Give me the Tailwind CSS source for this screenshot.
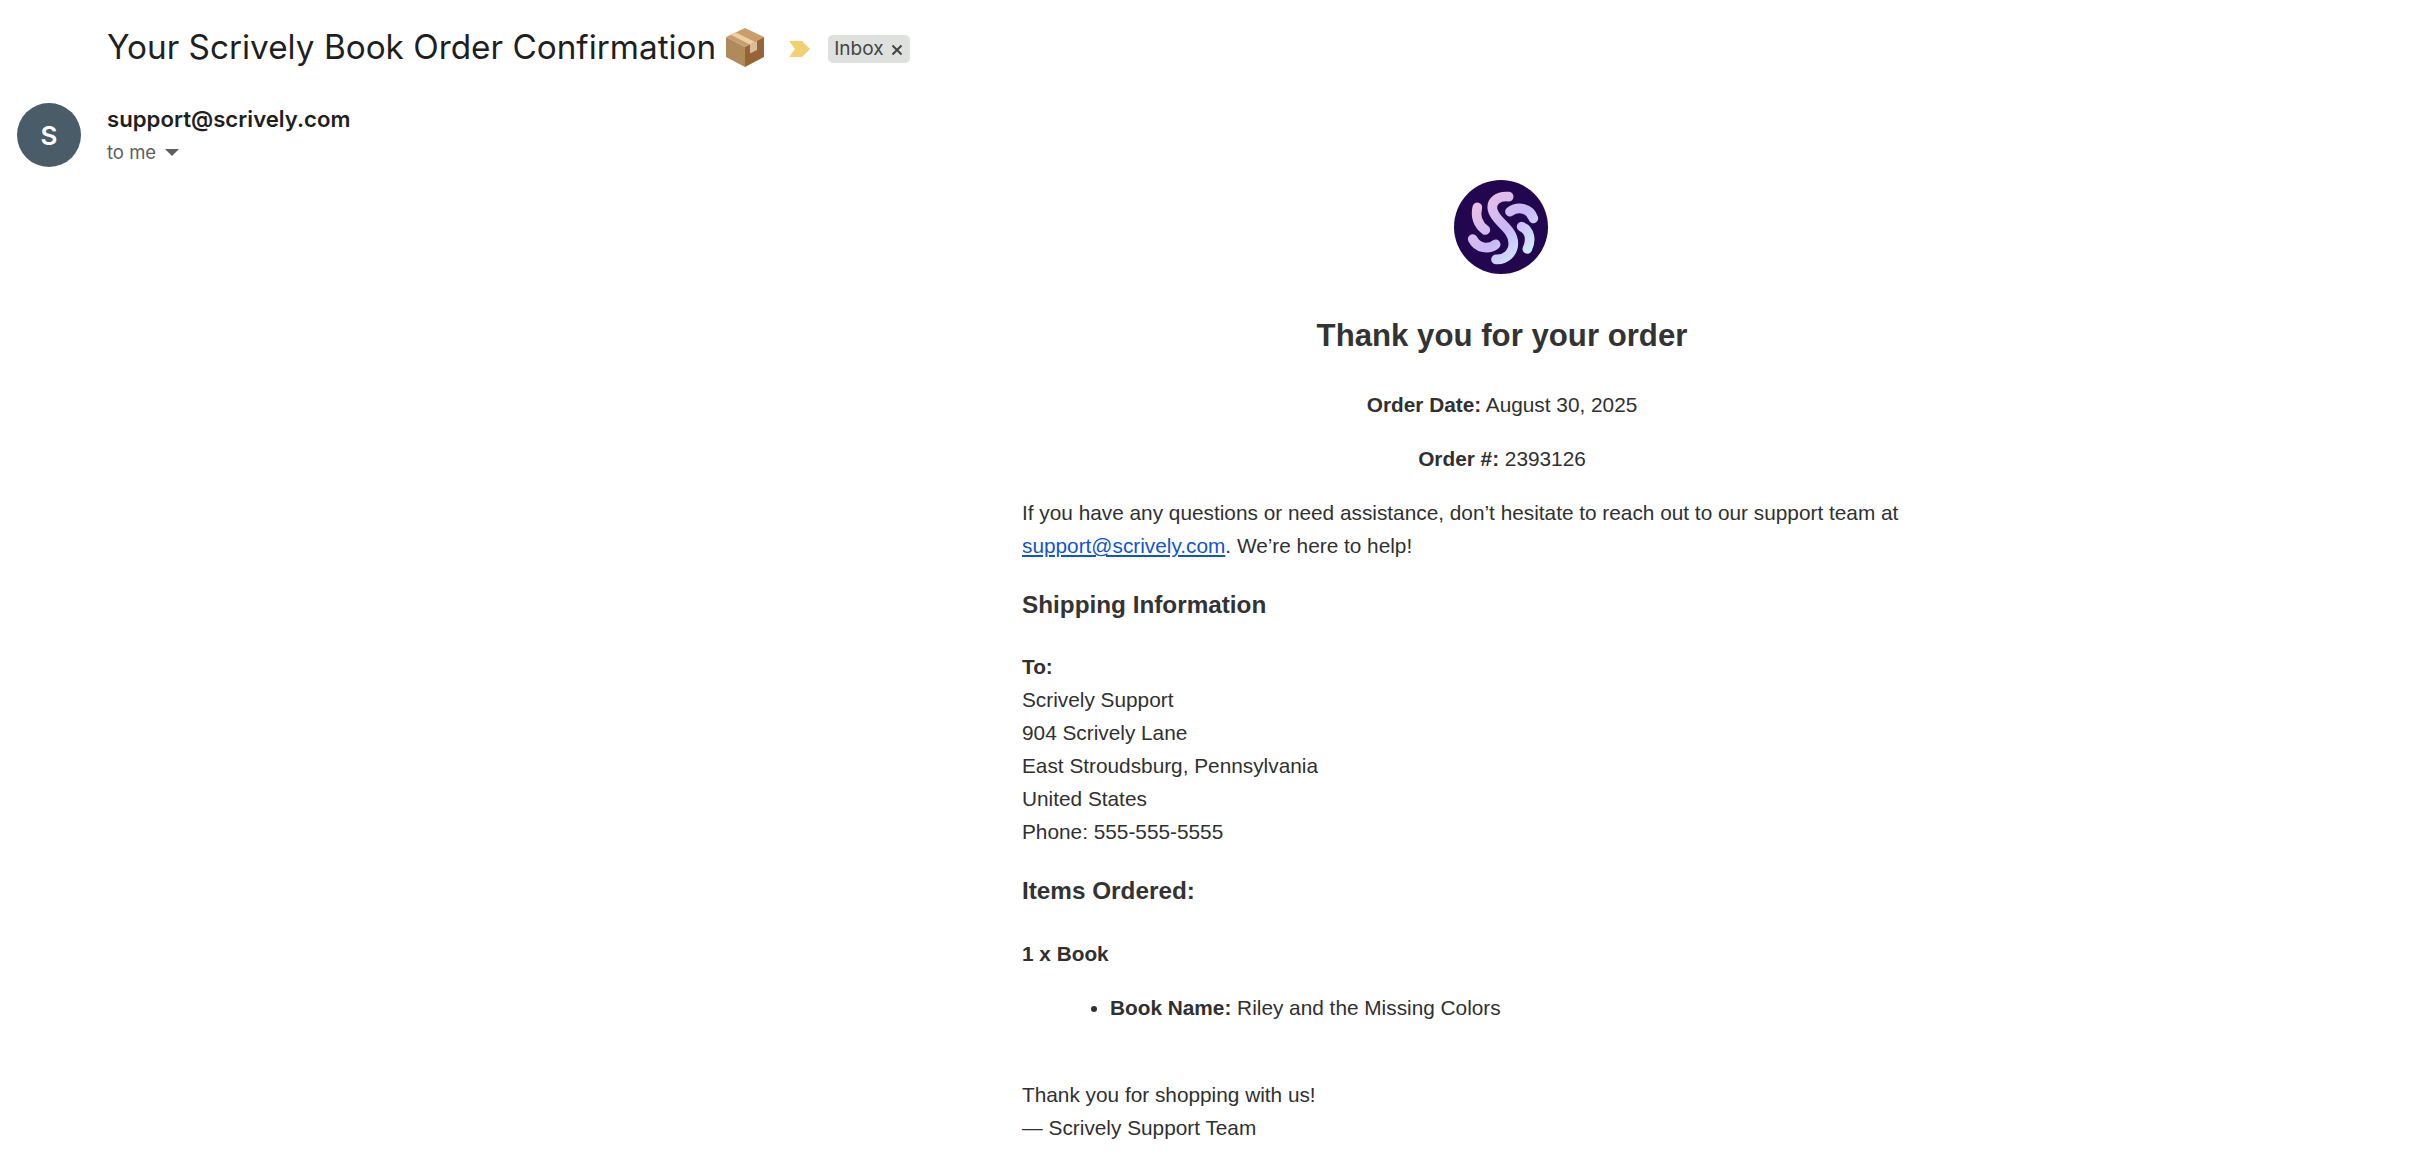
<!DOCTYPE html>
<html lang="en">
<head>
  <meta charset="UTF-8">
  <title>Your Scrively Book Order Confirmation</title>
  <script src="https://cdn.jsdelivr.net/npm/@tailwindcss/browser@4"></script>
</head>
<body class="bg-white font-['Liberation_Sans',sans-serif] text-[#303030]">
  <!-- subject -->
  <div class="flex items-center h-[94px] pl-[107px] font-['Inter',sans-serif]">
    <h1 class="text-[33.3px] leading-[44px] font-normal text-[#1f1f1f]">Your Scrively Book Order Confirmation</h1>
    <svg class="ml-[9px] w-[40px] h-[40px]" viewBox="0 0 40 40">
      <path d="M20 1 39 10 20 20 1 10Z" fill="#c99e6c"/>
      <path d="M1 10 20 20V40L1 30Z" fill="#b08a5a"/>
      <path d="M39 10 20 20V40L39 30Z" fill="#956538"/>
      <path d="M11 5.5 30 15 25 17.5 6 8Z" fill="#ecd0a4"/>
      <path d="M25 17.5 32 14V23L25 26.5Z" fill="#d8bd98"/>
    </svg>
    <svg class="ml-[24px] mt-[3px] w-[21px] h-[16px]" viewBox="0 0 21 16"><path d="M0 0H13L21 8 13 16H0L6 8Z" fill="#f1cf72"/></svg>
    <span class="ml-[18px] mt-[3px] flex items-center h-[28px] pl-[6px] pr-[7px] pt-[2px] rounded-[5px] bg-[#dfe1df] text-[19px] text-[#444]">Inbox
      <svg class="ml-[7px] w-[12px] h-[12px]" viewBox="0 0 12 12"><path d="M1.5 1.5 10.5 10.5M10.5 1.5 1.5 10.5" stroke="#444" stroke-width="2"/></svg>
    </span>
  </div>

  <!-- sender -->
  <div class="flex mt-[9px] pl-[17px] font-['Inter',sans-serif]">
    <div class="flex items-center justify-center w-[64px] h-[64px] rounded-full bg-[#4a5c68] text-white text-[26px] font-semibold">S</div>
    <div class="ml-[26px] mt-[1px]">
      <div class="text-[22.2px] leading-[30px] font-semibold text-[#1f1f1f]">support@scrively.com</div>
      <div class="flex items-center mt-[3px] text-[18.5px] leading-[30px] text-[#5e5e5e]">to me
        <svg class="ml-[9px] w-[14px] h-[7px]" viewBox="0 0 14 7"><path d="M0 0H14L7 7Z" fill="#5e5e5e"/></svg>
      </div>
    </div>
  </div>

  <!-- message -->
  <div class="w-[960px] ml-[1022px] text-[20.8px] leading-[33px] mt-[13px]">
    <svg class="mx-auto w-[94px] h-[94px] -translate-x-px" viewBox="102 45 282 282" fill="none" stroke="url(#g)" stroke-width="29" stroke-linecap="round">
      <defs>
        <linearGradient id="g" gradientUnits="userSpaceOnUse" x1="160" y1="100" x2="330" y2="280">
          <stop offset="0" stop-color="#f0c0de"/>
          <stop offset="0.55" stop-color="#c8b8f6"/>
          <stop offset="1" stop-color="#d2f4fa"/>
        </linearGradient>
      </defs>
      <circle cx="243" cy="186" r="141" fill="#22064f" stroke="none"/>
      <path d="M172 127C165 155 175 180 196 195"/>
      <path d="M158 222C172 250 205 255 227 238"/>
      <path d="M266 95C235 92 212 108 218 135C225 170 280 190 280 235C280 265 255 285 228 283"/>
      <path d="M270 140C295 122 330 130 340 160"/>
      <path d="M305 185C330 195 335 225 322 252"/>
    </svg>
    <h2 class="mt-[42px] text-center text-[31.2px] leading-[40px] font-bold text-[#333]">Thank you for your order</h2>
    <p class="mt-[32px] text-center"><strong>Order Date:</strong> August 30, 2025</p>
    <p class="mt-[21px] text-center"><strong>Order #:</strong> 2393126</p>
    <p class="mt-[21px]">If you have any questions or need assistance, don’t hesitate to reach out to our support team at<br><a href="#" class="text-[#1155cc] underline">support@scrively.com</a>. We’re here to help!</p>
    <h3 class="mt-[25px] text-[24.3px] leading-[36px] font-bold text-[#333]">Shipping Information</h3>
    <p class="mt-[27px]"><strong>To:</strong><br>Scrively Support<br>904 Scrively Lane<br>East Stroudsburg, Pennsylvania<br>United States<br>Phone: 555-555-5555</p>
    <h3 class="mt-[25px] text-[24.3px] leading-[36px] font-bold text-[#333]">Items Ordered:</h3>
    <p class="mt-[28px] font-bold">1 x Book</p>
    <ul class="mt-[21px] pl-[88px] list-disc">
      <li><strong>Book Name:</strong> Riley and the Missing Colors</li>
    </ul>
    <p class="mt-[54px]">Thank you for shopping with us!<br>— Scrively Support Team</p>
  </div>
</body>
</html>
